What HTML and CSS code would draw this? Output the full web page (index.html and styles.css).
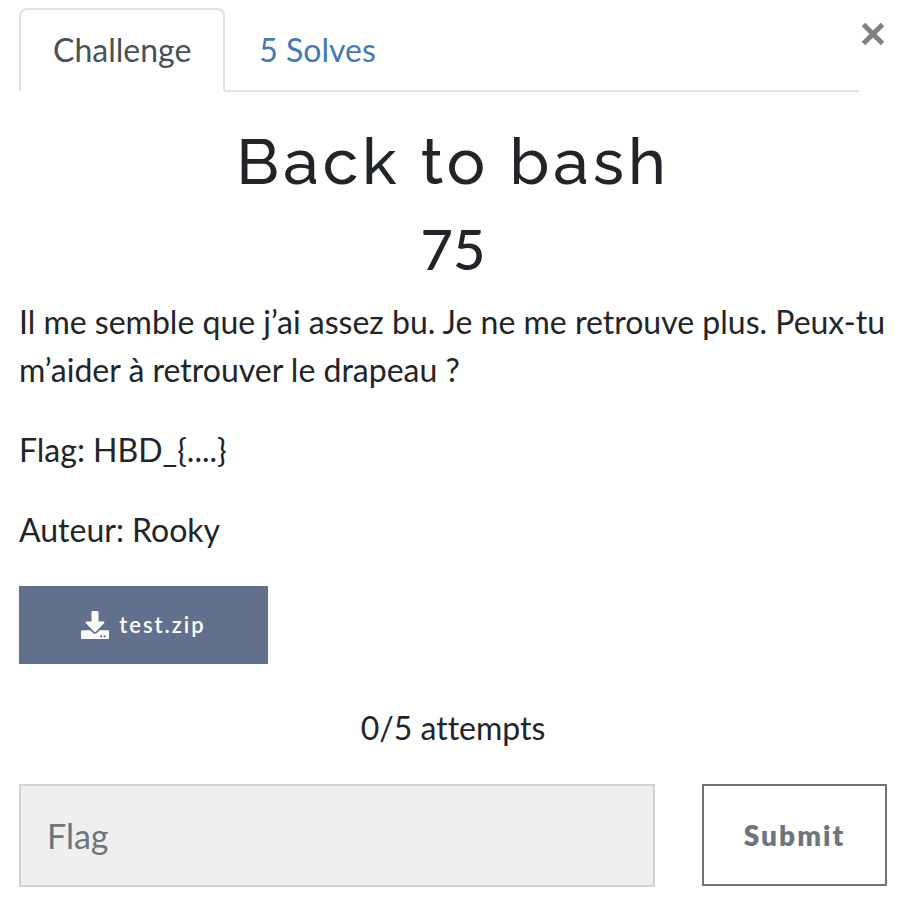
FILE: index.html
```html
<!DOCTYPE html>
<html lang="fr">
<head>
<meta charset="utf-8">
<meta name="viewport" content="width=device-width, initial-scale=1">
<title>Back to bash</title>
<link rel="stylesheet" href="styles.css">
</head>
<body>
<main class="challenge">
  <header class="top">
    <nav class="tabs">
      <a class="tab tab-active" href="#challenge">Challenge</a>
      <a class="tab" href="#solves">5 Solves</a>
    </nav>
    <button class="close" type="button" aria-label="Close">
      <svg viewBox="0 0 24 24" width="24" height="24" aria-hidden="true"><path d="M2.500 2.500L21.500 21.500M21.500 2.500L2.500 21.500"/></svg>
    </button>
  </header>
  <section id="challenge">
    <h1 class="name">Back to bash</h1>
    <h2 class="value">75</h2>
    <div class="description">
      <p>Il me semble que j’ai assez bu. Je ne me retrouve plus. Peux-tu m’aider à retrouver le drapeau ?</p>
      <p>Flag: HBD_{....}</p>
      <p>Auteur: Rooky</p>
    </div>
    <a class="file" href="#test.zip">
      <svg viewBox="0 0 512 512" width="28" height="28" aria-hidden="true"><path d="M216 0h80c13.300 0 24 10.700 24 24v168h87.700c17.800 0 26.700 21.500 14.100 34.100L269.700 378.300c-7.500 7.500-19.800 7.500-27.300 0L90.100 226.100c-12.600-12.600-3.700-34.100 14.100-34.100H192V24c0-13.300 10.700-24 24-24zm296 376v112c0 13.300-10.700 24-24 24H24c-13.300 0-24-10.700-24-24V376c0-13.300 10.700-24 24-24h146.700l49 49c20.100 20.100 52.500 20.100 72.600 0l49-49H488c13.300 0 24 10.700 24 24zm-124 88c0-11-9-20-20-20s-20 9-20 20 9 20 20 20 20-9 20-20zm64 0c0-11-9-20-20-20s-20 9-20 20 9 20 20 20 20-9 20-20z"/></svg>
      <span>test.zip</span>
    </a>
    <p class="attempts">0/5 attempts</p>
    <form class="answer">
      <input class="flag" type="text" placeholder="Flag" aria-label="Flag">
      <button class="submit" type="submit">Submit</button>
    </form>
  </section>
</main>
</body>
</html>
```

FILE: styles.css
```css
* {
  box-sizing: border-box;
}

body {
  margin: 0;
  background: #fff;
  color: #212529;
  font-family: Lato, "Liberation Sans", sans-serif;
  font-size: 32px;
  font-variant-ligatures: none;
  line-height: 48px;
}

.challenge {
  padding: 8px 17px 16px 19px;
}

.top {
  display: flex;
  align-items: flex-start;
}

.tabs {
  display: flex;
  flex: 1;
  border-bottom: 2px solid #dee2e6;
}

.tab {
  margin-bottom: -2px;
  padding: 16px 32px;
  border: 2px solid transparent;
  border-radius: 8px 8px 0 0;
  color: #4279b6;
  text-decoration: none;
}

.tab-active {
  border-color: #dee2e6 #dee2e6 #fff;
  background: #fff;
  color: #495057;
}

.close {
  display: flex;
  margin-top: 14px;
  padding: 0 2px;
  border: 0;
  background: none;
}

.close path {
  fill: none;
  stroke: #808080;
  stroke-width: 5;
}

.name,
.value {
  margin: 0;
  font-weight: 500;
  text-align: center;
}

.name {
  padding-top: 32px;
  font-family: Raleway, Lato, sans-serif;
  font-size: 64px;
  line-height: 76px;
  letter-spacing: 4px;
}

.value {
  margin: 15px 0 16px;
  font-size: 56px;
  line-height: 67px;
}

.description p {
  margin: 0 0 32px;
}

.file {
  display: inline-flex;
  align-items: center;
  justify-content: center;
  gap: 10px;
  min-width: 249px;
  height: 78px;
  background: #61718d;
  color: #fff;
  font-size: 22px;
  font-weight: 600;
  letter-spacing: 2px;
  text-decoration: none;
}

.file path {
  fill: currentColor;
}

.attempts {
  margin: 40px 0 32px;
  text-align: center;
}

.answer {
  display: flex;
  align-items: flex-start;
  gap: 47px;
}

.flag {
  flex: 1;
  min-width: 0;
  height: 103px;
  padding: 0 26px;
  border: 2px solid #ced4da;
  border-radius: 0;
  background: #efefef;
  color: #495057;
  font: inherit;
  font-size: 34px;
}

.flag::placeholder {
  color: #6c757d;
}

.submit {
  width: 185px;
  height: 102px;
  border: 2px solid #6c757d;
  background: #fff;
  color: #6c757d;
  font-family: inherit;
  font-size: 28px;
  font-weight: 800;
  letter-spacing: 2px;
}
```
